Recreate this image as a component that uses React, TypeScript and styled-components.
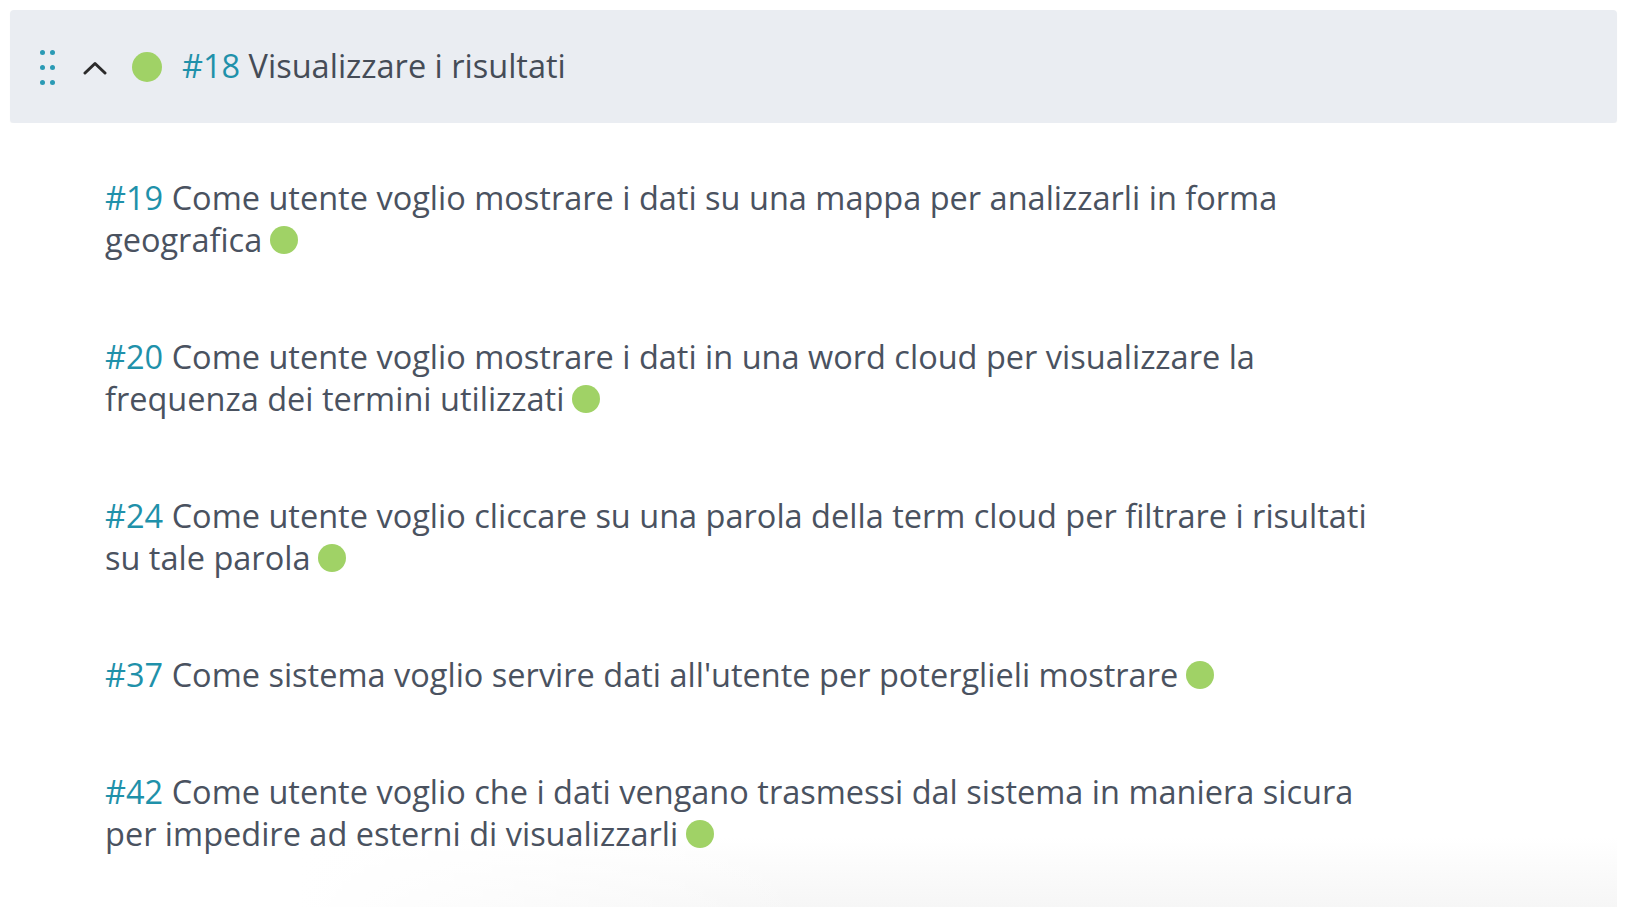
import React from "react";
import styled, { createGlobalStyle } from "styled-components";

const GlobalStyle = createGlobalStyle`
  html, body {
    margin: 0;
    padding: 0;
    background: #ffffff;
  }
  body {
    font-family: "Open Sans", "Noto Sans", "Liberation Sans", sans-serif;
    -webkit-font-smoothing: antialiased;
  }
`;

const Page = styled.div`
  padding: 10px 11px 0 10px;
  width: 1607px;
`;

const EpicHeader = styled.div`
  height: 113px;
  display: flex;
  align-items: center;
  padding-left: 30px;
  background: #eaedf2;
  border-radius: 4px;
  box-shadow: 0 1px 1px rgba(40, 50, 70, 0.05);
`;

const DragHandle = styled.div`
  display: grid;
  grid-template-columns: repeat(2, 5px);
  column-gap: 5px;
  row-gap: 10px;
  margin-top: 2px;
`;

const Dot = styled.span`
  width: 5px;
  height: 5px;
  border-radius: 50%;
  background: #2a9ab5;
`;

const Chevron = styled.svg`
  margin-left: 28px;
  margin-top: 2px;
`;

const StatusDot = styled.span<{ $size: number }>`
  display: inline-block;
  width: ${({ $size }) => $size}px;
  height: ${({ $size }) => $size}px;
  border-radius: 50%;
  background: #a0d266;
  flex-shrink: 0;
`;

const HeaderDot = styled(StatusDot)`
  margin-left: 25px;
`;

const HeaderTitle = styled.div`
  margin-left: 20px;
  font-size: 32.5px;
  color: #454c57;
  margin-bottom: 2px;
`;

const Ref = styled.span`
  color: #1f91aa;
`;

const StoryList = styled.div`
  display: flex;
  flex-direction: column;
  gap: 75px;
  padding: 54px 0 52px 95px;
  background:
    linear-gradient(to right, #ffffff 18%, rgba(255, 255, 255, 0) 50%),
    linear-gradient(to bottom, #ffffff calc(100% - 70px), #f6f6f6 100%);
`;

const Story = styled.div`
  max-width: 1270px;
  font-size: 32.5px;
  line-height: 42px;
  color: #4a5260;
`;

const InlineDot = styled(StatusDot)`
  margin-left: 8px;
  vertical-align: -2px;
`;

const stories = [
  { id: 19, text: "Come utente voglio mostrare i dati su una mappa per analizzarli in forma geografica" },
  { id: 20, text: "Come utente voglio mostrare i dati in una word cloud per visualizzare la frequenza dei termini utilizzati" },
  { id: 24, text: "Come utente voglio cliccare su una parola della term cloud per filtrare i risultati su tale parola" },
  { id: 37, text: "Come sistema voglio servire dati all'utente per poterglieli mostrare" },
  { id: 42, text: "Come utente voglio che i dati vengano trasmessi dal sistema in maniera sicura per impedire ad esterni di visualizzarli" },
];

export default function App() {
  return (
    <Page>
      <GlobalStyle />
      <EpicHeader>
        <DragHandle>
          {Array.from({ length: 6 }).map((_, i) => (
            <Dot key={i} />
          ))}
        </DragHandle>
        <Chevron width="24" height="14" viewBox="0 0 24 14">
          <path d="M2 12 L12 2.5 L22 12" fill="none" stroke="#2b2b2b" strokeWidth="3" strokeLinecap="round" strokeLinejoin="round" />
        </Chevron>
        <HeaderDot $size={30} />
        <HeaderTitle>
          <Ref>#18</Ref> Visualizzare i risultati
        </HeaderTitle>
      </EpicHeader>
      <StoryList>
        {stories.map((s) => (
          <Story key={s.id}>
            <Ref>#{s.id}</Ref> {s.text}
            <InlineDot $size={28} />
          </Story>
        ))}
      </StoryList>
    </Page>
  );
}
